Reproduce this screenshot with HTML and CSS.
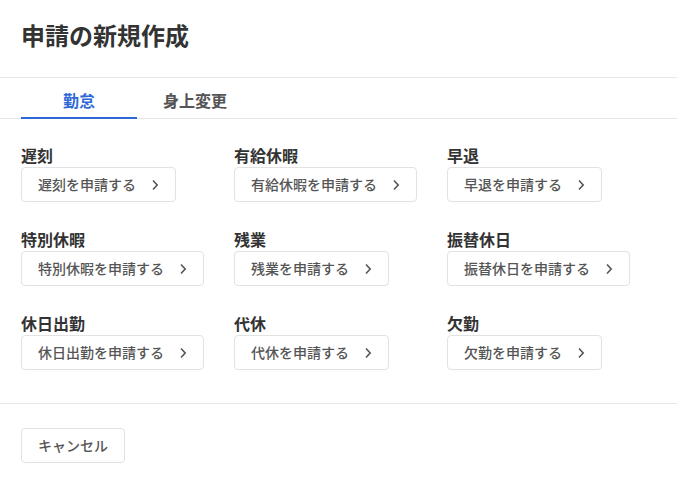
FILE: index.html
```html
<!DOCTYPE html>
<html lang="ja">
<head>
<meta charset="utf-8">
<title>申請の新規作成</title>
<link rel="stylesheet" href="styles.css">
</head>
<body>
<div class="dialog">
  <header class="header">
    <h1 class="title">申請の新規作成</h1>
  </header>
  <nav class="tabs">
    <div class="tab active">勤怠</div>
    <div class="tab">身上変更</div>
  </nav>
  <main class="content">
    <div class="grid">
      <div class="item"><div class="label">遅刻</div><button class="apply">遅刻を申請する<svg class="chev" viewBox="0 0 8 12" width="8" height="12"><path d="M2 1.5 6.2 6 2 10.5"/></svg></button></div>
      <div class="item"><div class="label">有給休暇</div><button class="apply">有給休暇を申請する<svg class="chev" viewBox="0 0 8 12" width="8" height="12"><path d="M2 1.5 6.2 6 2 10.5"/></svg></button></div>
      <div class="item"><div class="label">早退</div><button class="apply">早退を申請する<svg class="chev" viewBox="0 0 8 12" width="8" height="12"><path d="M2 1.5 6.2 6 2 10.5"/></svg></button></div>
      <div class="item"><div class="label">特別休暇</div><button class="apply">特別休暇を申請する<svg class="chev" viewBox="0 0 8 12" width="8" height="12"><path d="M2 1.5 6.2 6 2 10.5"/></svg></button></div>
      <div class="item"><div class="label">残業</div><button class="apply">残業を申請する<svg class="chev" viewBox="0 0 8 12" width="8" height="12"><path d="M2 1.5 6.2 6 2 10.5"/></svg></button></div>
      <div class="item"><div class="label">振替休日</div><button class="apply">振替休日を申請する<svg class="chev" viewBox="0 0 8 12" width="8" height="12"><path d="M2 1.5 6.2 6 2 10.5"/></svg></button></div>
      <div class="item"><div class="label">休日出勤</div><button class="apply">休日出勤を申請する<svg class="chev" viewBox="0 0 8 12" width="8" height="12"><path d="M2 1.5 6.2 6 2 10.5"/></svg></button></div>
      <div class="item"><div class="label">代休</div><button class="apply">代休を申請する<svg class="chev" viewBox="0 0 8 12" width="8" height="12"><path d="M2 1.5 6.2 6 2 10.5"/></svg></button></div>
      <div class="item"><div class="label">欠勤</div><button class="apply">欠勤を申請する<svg class="chev" viewBox="0 0 8 12" width="8" height="12"><path d="M2 1.5 6.2 6 2 10.5"/></svg></button></div>
    </div>
  </main>
  <footer class="footer">
    <button class="cancel">キャンセル</button>
  </footer>
</div>
</body>
</html>
```
FILE: styles.css
```css
* { box-sizing: border-box; }
html, body {
  margin: 0;
  padding: 0;
  background: #fff;
}
body {
  font-family: "Noto Sans CJK JP", "Noto Sans", sans-serif;
  color: #333;
}
.dialog {
  width: 677px;
  min-height: 481px;
  background: #fff;
}
.header {
  padding: 17px 21px 24px;
  border-bottom: 1px solid #e8e8e8;
}
.title {
  margin: 0;
  font-size: 24px;
  line-height: 36px;
  font-weight: 700;
  color: #333;
}
.tabs {
  display: flex;
  padding: 0 21px;
  border-bottom: 1px solid #e6e6e6;
}
.tab {
  width: 116px;
  text-align: center;
  font-size: 16px;
  line-height: 24px;
  font-weight: 700;
  color: #555;
  padding: 10px 0 5px;
  border-bottom: 2px solid transparent;
  margin-bottom: -1px;
}
.tab.active {
  color: #2f68d6;
  border-bottom-color: #2f68d6;
}
.content {
  padding: 24px 21px 33px;
  border-bottom: 1px solid #e8e8e8;
}
.grid {
  display: grid;
  grid-template-columns: 213px 213px 213px;
  row-gap: 25px;
}
.item {
  display: flex;
  flex-direction: column;
  align-items: flex-start;
}
.label {
  font-size: 16px;
  line-height: 24px;
  font-weight: 700;
  color: #333;
}
.apply, .cancel {
  display: inline-flex;
  align-items: center;
  font-family: inherit;
  font-size: 14px;
  line-height: 19px;
  font-weight: 500;
  color: #555;
  background: #fff;
  border: 1px solid #e2e2e2;
  border-radius: 4px;
  padding: 7px 16px;
  margin: 0;
}
.chev {
  margin-left: 15px;
  fill: none;
  stroke: #555;
  stroke-width: 1.6;
}
.footer {
  padding: 24px 21px;
}
```
